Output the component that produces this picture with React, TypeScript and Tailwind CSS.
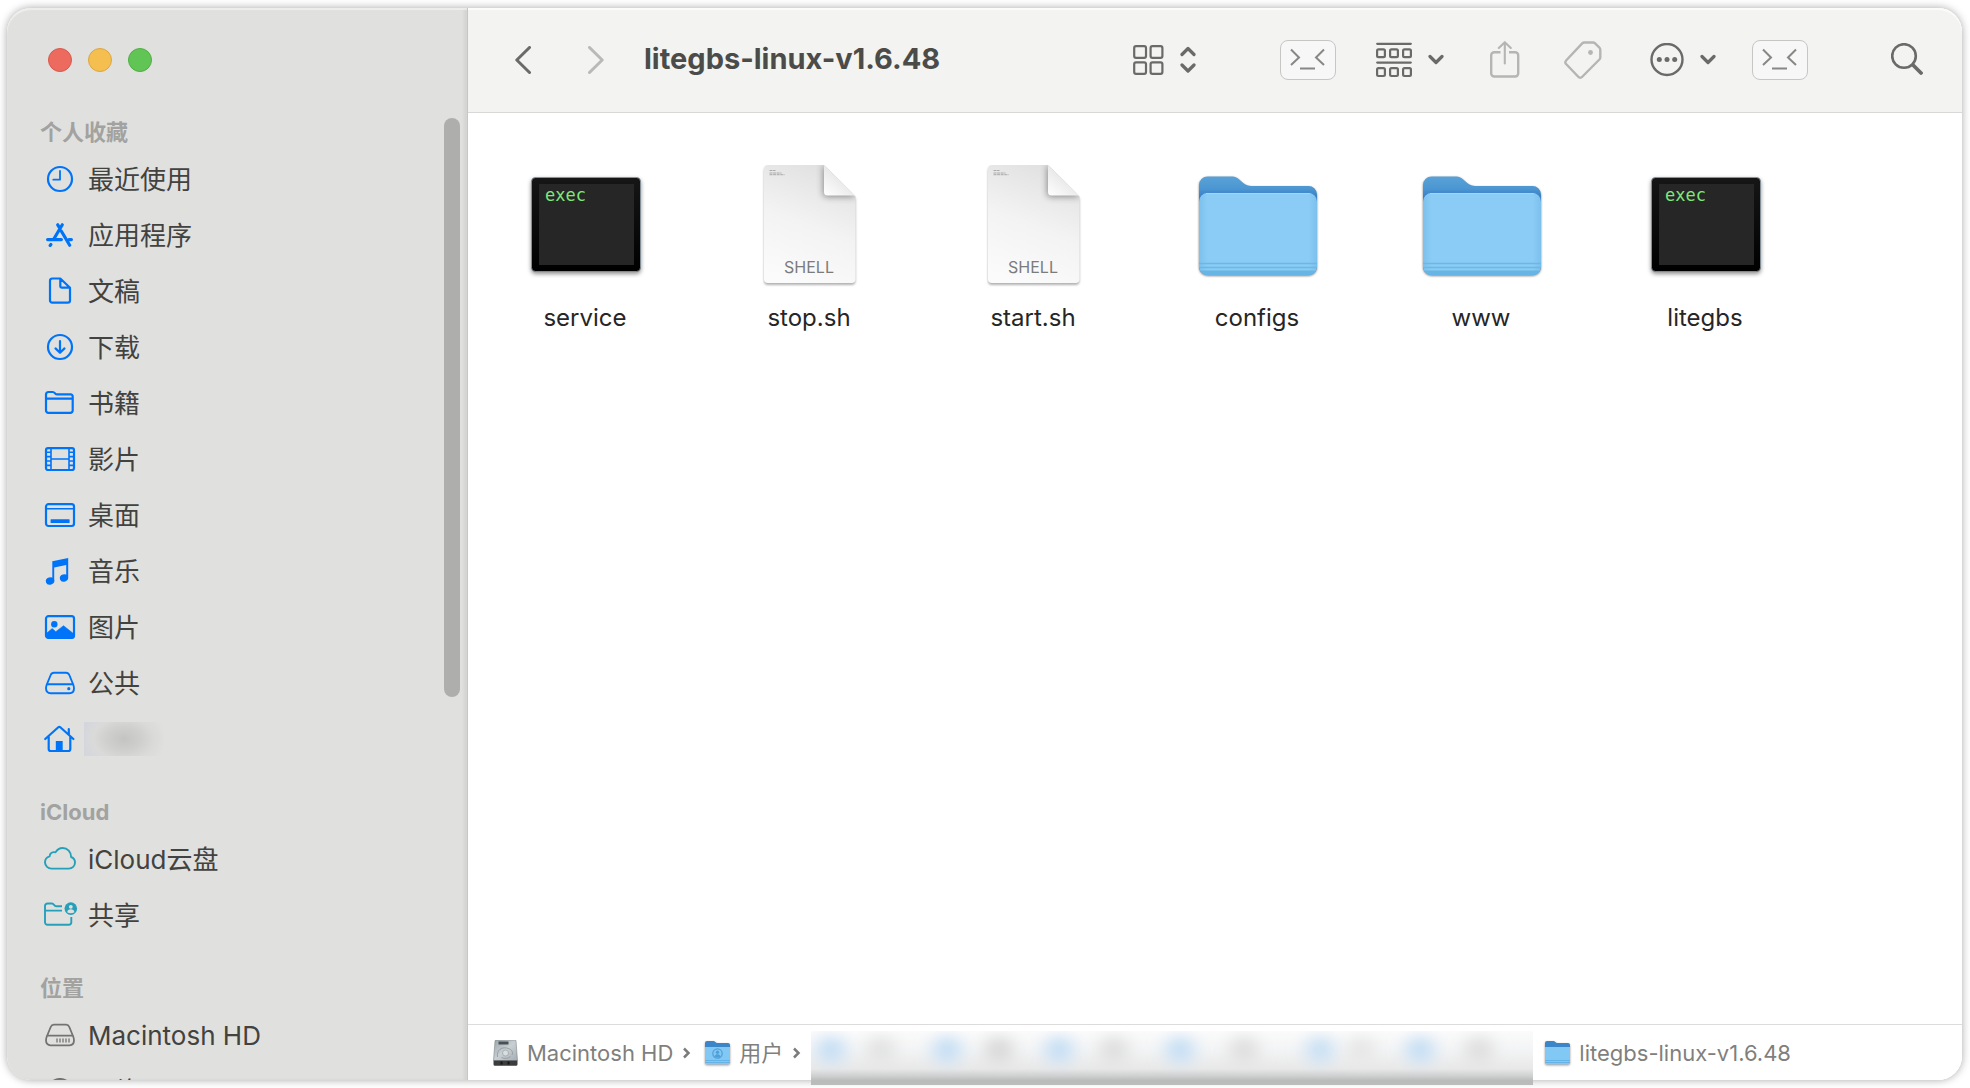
import type { ReactNode } from "react";

type IconProps = { children: ReactNode };

function SideIcon({ children }: IconProps) {
  return (
    <svg
      viewBox="0 0 32 32"
      className="size-8 shrink-0 overflow-visible"
      fill="none"
      stroke="currentColor"
      strokeWidth="2.2"
      strokeLinecap="round"
      strokeLinejoin="round"
      aria-hidden="true"
    >
      {children}
    </svg>
  );
}

const icons = {
  clock: (
    <>
      <circle cx="16" cy="16" r="12" />
      <path d="M16 8v8.7H9.3" strokeWidth="1.8" />
    </>
  ),
  apps: (
    <g strokeWidth="3.2">
      <path d="M18.3 5.8 9.8 20M3.6 20.6h13.8M25 20.6h2.4M13.7 5.8l1.6 2.6M17.4 12.2l8.3 14" />
      <path d="m6.9 25.4-.8 1" />
    </g>
  ),
  doc: (
    <path d="M16.3 3.5H8.2A2.2 2.2 0 0 0 6 5.7v19.8a2.2 2.2 0 0 0 2.2 2.2h15.6a2.2 2.2 0 0 0 2.2-2.2V12.8zM16.3 3.8v7.4a1.5 1.5 0 0 0 1.5 1.5H26" />
  ),
  download: (
    <>
      <circle cx="16" cy="16" r="12" />
      <path d="M16 10.2v11.4M11.5 17.4l4.5 4.4 4.5-4.4" />
    </>
  ),
  folder: (
    <path d="M2 23.5V7.3a2.3 2.3 0 0 1 2.3-2.3h4.6c1.8 0 2.3 2.4 4.2 2.4h13.6a2 2 0 0 1 2 2v14.1a2.3 2.3 0 0 1-2.3 2.3H4.3A2.3 2.3 0 0 1 2 23.5ZM2 11.7h26.7" />
  ),
  film: (
    <>
      <rect x="2" y="5.2" width="28" height="21.8" rx="2" />
      <path d="M7 5.5v21M25 5.5v21M7 16h18M2.5 9.3H7M2.5 13.6H7M2.5 18H7M2.5 22.4H7M25 9.3h4.5M25 13.6h4.5M25 18h4.5M25 22.4h4.5" strokeWidth="1.6" />
    </>
  ),
  desktop: (
    <>
      <rect x="2" y="5.2" width="28" height="21.8" rx="2.4" />
      <path d="M2.4 9.7h27.2" strokeWidth="1.6" />
      <rect x="6.6" y="20.2" width="19" height="3.8" rx="0.6" fill="currentColor" stroke="none" />
    </>
  ),
  music: (
    <g fill="currentColor" stroke="none">
      <path d="M8.3 6.2 24.2 3v19.5h-2V10l-12 2.6v13H8.3z" />
      <ellipse cx="6.1" cy="26" rx="4.3" ry="3.6" transform="rotate(-20 6.1 26)" />
      <ellipse cx="20" cy="23" rx="4.2" ry="3.6" transform="rotate(-20 20 23)" />
    </g>
  ),
  picture: (
    <>
      <rect x="2" y="5.2" width="28" height="21.8" rx="2.4" />
      <circle cx="10.3" cy="13.3" r="3.2" fill="currentColor" stroke="none" />
      <path d="m2 22.8 6.2-5.3 3.6 3.2 7.7-6 10.2 8.1v3.4l-1 .8H3.2L2 26z" fill="currentColor" strokeWidth="0.6" />
    </>
  ),
  drive: (
    <>
      <path d="M2 21.3c0-1.3.3-2.5.8-3.8L6.7 8c.6-1.5 1.6-2.3 3.2-2.3h12.2c1.6 0 2.6.8 3.2 2.3l3.9 9.5c.5 1.3.8 2.5.8 3.8 0 3-1.7 5-4.5 5h-19C3.7 26.3 2 24.3 2 21.3ZM3 17.2h26" strokeWidth="1.9" />
      <circle cx="24.8" cy="21.7" r="1.6" fill="currentColor" stroke="none" />
    </>
  ),
  home: (
    <>
      <path d="M1.2 16 14.3 4.3a1.5 1.5 0 0 1 2 0L29.4 16M24.8 11.5V6.2M4.7 14v12a2 2 0 0 0 2 2h17.6a2 2 0 0 0 2-2V14" />
      <path d="M11.8 18h6.9v10h-6.9z" fill="currentColor" stroke="none" />
    </>
  ),
  cloud: (
    <path d="M7.600 25.600A6.400 6.400 0 0 1 1 19.400c0-3 1.900-5.300 4.600-6 .1-3.200 3.200-5 5.900-4 1.500-2.600 4-4.400 7.100-4.400 4.900 0 8.600 4 8.500 9 2.300.8 3.900 2.900 3.900 5.500 0 3.500-2.700 6.100-6.300 6.100z" strokeWidth="1.9" />
  ),
  shared: (
    <>
      <path d="M18 7.200h-6C10.300 7.200 9.800 4.500 8 4.500H3.500a2.500 2.500 0 0 0-2.500 2.500v16.200a2.500 2.500 0 0 0 2.500 2.500h21.300a2.500 2.500 0 0 0 2.500-2.500V18M1 11.600h17" strokeLinecap="butt" strokeWidth="1.9" />
      <circle cx="26.800" cy="9.600" r="6.300" fill="currentColor" stroke="none" />
      <circle cx="26.800" cy="7.800" r="1.900" fill="#e0e0de" stroke="none" />
      <path d="M23.200 13.200c.3-2 1.700-2.900 3.600-2.900s3.300.9 3.600 2.900c-2 1.300-5.200 1.300-7.200 0z" fill="#e0e0de" stroke="none" />
    </>
  ),
  disk: (
    <>
      <path d="M2 21.300c0-1.300.3-2.500.8-3.800L6.700 8c.6-1.500 1.600-2.300 3.200-2.300h12.200c1.600 0 2.600.8 3.200 2.300l3.900 9.500c.5 1.300.8 2.500.8 3.800 0 3-1.700 5-4.500 5h-19C3.700 26.300 2 24.300 2 21.300ZM3 16.600h26" strokeWidth="1.8" />
      <path d="M13 20v3M16 20v3M19 20v3M22 20v3M25 20v3" strokeWidth="1.300" />
    </>
  ),
  globe: (
    <>
      <circle cx="16" cy="16" r="12" />
      <ellipse cx="16" cy="16" rx="5.500" ry="12" />
      <path d="M4 16h24" />
    </>
  ),
};

type Section = {
  title: string;
  tone: string;
  items: { icon: keyof typeof icons; label: string }[];
};

const sections: Section[] = [
  {
    title: "个人收藏",
    tone: "text-[#0074f8]",
    items: [
      { icon: "clock", label: "最近使用" },
      { icon: "apps", label: "应用程序" },
      { icon: "doc", label: "文稿" },
      { icon: "download", label: "下载" },
      { icon: "folder", label: "书籍" },
      { icon: "film", label: "影片" },
      { icon: "desktop", label: "桌面" },
      { icon: "music", label: "音乐" },
      { icon: "picture", label: "图片" },
      { icon: "drive", label: "公共" },
      { icon: "home", label: "" },
    ],
  },
  {
    title: "iCloud",
    tone: "text-[#26a0b9]",
    items: [
      { icon: "cloud", label: "iCloud云盘" },
      { icon: "shared", label: "共享" },
    ],
  },
  {
    title: "位置",
    tone: "text-[#737371]",
    items: [
      { icon: "disk", label: "Macintosh HD" },
      { icon: "globe", label: "网络" },
    ],
  },
];

function Sidebar() {
  return (
    <aside className="flex w-[461px] shrink-0 flex-col overflow-hidden rounded-l-[24px] border-r border-[#c6c6c4] bg-[#e0e0de] shadow-[inset_0_2px_1px_rgba(255,255,255,0.5),inset_-3px_0_3px_rgba(0,0,0,0.06)]">
      <div className="flex h-[107px] shrink-0 gap-4 pt-10 pl-[41px]">
        <button aria-label="关闭" className="size-6 rounded-full border border-[#d9584e] bg-[#ed6a5f]" />
        <button aria-label="最小化" className="size-6 rounded-full border border-[#dba644] bg-[#f5bf4f]" />
        <button aria-label="缩放" className="size-6 rounded-full border border-[#52ad44] bg-[#61c555]" />
      </div>
      <div className="flex min-h-0 flex-1">
        <nav className="flex min-w-0 flex-1 flex-col gap-7 overflow-hidden">
          {sections.map((section) => (
            <section key={section.title}>
              <h2 className="h-9 pl-[33px] text-[22px] leading-[34px] font-bold text-[#a2a2a0]">{section.title}</h2>
              <ul>
                {section.items.map((item) => (
                  <li key={item.icon}>
                    <a href="#" className="flex h-14 items-center gap-3 pl-[37px]">
                      <span className={section.tone}>
                        <SideIcon>{icons[item.icon]}</SideIcon>
                      </span>
                      {item.label ? (
                        <span className="pt-[2px] text-[26px] leading-8 whitespace-nowrap text-[#424240]">{item.label}</span>
                      ) : (
                        <span className="-ml-1 h-[34px] w-20 bg-[radial-gradient(ellipse_38px_26px_at_40px_17px,#c4c4c2_0%,#cfcfcd_45%,#dadad9_80%,transparent_110%),linear-gradient(90deg,#d4d6dc,#e0e0de)]" />
                      )}
                    </a>
                  </li>
                ))}
              </ul>
            </section>
          ))}
        </nav>
        <div className="mt-[3px] mr-[7px] h-[60%] w-4 shrink-0 rounded-full bg-[#aeaeac]" />
      </div>
    </aside>
  );
}

function ChevronDown() {
  return (
    <svg width="16" height="12" viewBox="0 0 16 12" fill="none" stroke="#6a6a68" strokeWidth="3.200" strokeLinecap="round" strokeLinejoin="round">
      <path d="m2 2.500 6 6 6-6" />
    </svg>
  );
}

function TerminalButton() {
  return (
    <button aria-label="终端" className="flex h-10 w-14 items-center justify-center rounded-lg border border-[#c6c6c4] bg-[#f7f7f7]">
      <svg width="54" height="38" viewBox="0 0 54 38" fill="none" stroke="#878785" strokeWidth="2">
        <path d="m10 8.500 8 8-8 7.500M43 8.500l-8 8 8 7.500M19 27.500h15" />
      </svg>
    </button>
  );
}

function Toolbar() {
  return (
    <header className="flex h-[105px] shrink-0 items-center rounded-tr-[24px] border-b border-[#d8d8d6] bg-[#f3f3f1] pr-[39px] pl-[47px] shadow-[inset_0_2px_1px_rgba(255,255,255,0.7)]">
      <button aria-label="后退">
        <svg width="16" height="28" viewBox="0 0 16 28" fill="none" stroke="#6a6a68" strokeWidth="3" strokeLinecap="round" strokeLinejoin="round">
          <path d="M14.500 1.500 1.800 14l12.700 12.500" />
        </svg>
      </button>
      <button aria-label="前进" className="ml-[57px]">
        <svg width="16" height="28" viewBox="0 0 16 28" fill="none" stroke="#b9b9b7" strokeWidth="3" strokeLinecap="round" strokeLinejoin="round">
          <path d="M1.500 1.500 14.200 14 1.500 26.500" />
        </svg>
      </button>
      <h1 className="ml-10 pb-[2px] text-[29px] leading-9 font-bold whitespace-nowrap text-[#4b4b49]">litegbs-linux-v1.6.48</h1>

      <div className="ml-auto flex items-center">
        <button aria-label="显示方式" className="flex items-center gap-4">
          <svg width="31" height="30" viewBox="0 0 31 30" fill="none" stroke="#6a6a68" strokeWidth="2.200">
            <rect x="1.200" y="1.200" width="11.800" height="11.600" rx="1.800" />
            <rect x="17.600" y="1.200" width="11.800" height="11.600" rx="1.800" />
            <rect x="1.200" y="17.300" width="11.800" height="11.600" rx="1.800" />
            <rect x="17.600" y="17.300" width="11.800" height="11.600" rx="1.800" />
          </svg>
          <svg width="16" height="28" viewBox="0 0 16 28" fill="none" stroke="#6a6a68" strokeWidth="3.200" strokeLinecap="round" strokeLinejoin="round">
            <path d="m2 8.500 6-6 6 6M2 19l6 6 6-6" />
          </svg>
        </button>
        <div className="ml-[84px]">
          <TerminalButton />
        </div>
        <button aria-label="分组" className="ml-10 flex items-center gap-4">
          <svg width="36" height="36" viewBox="0 0 36 36" fill="none" stroke="#6a6a68" strokeWidth="2.200">
            <path d="M1.200 1.800h33.600M1.200 20.600h33.600" strokeLinecap="round" />
            <rect x="1.100" y="7.400" width="7.800" height="7.800" rx="1.400" />
            <rect x="14.100" y="7.400" width="7.800" height="7.800" rx="1.400" />
            <rect x="27.100" y="7.400" width="7.800" height="7.800" rx="1.400" />
            <rect x="1.100" y="26.200" width="7.800" height="7.800" rx="1.400" />
            <rect x="14.100" y="26.200" width="7.800" height="7.800" rx="1.400" />
            <rect x="27.100" y="26.200" width="7.800" height="7.800" rx="1.400" />
          </svg>
          <ChevronDown />
        </button>
        <button aria-label="共享" className="ml-[46px]">
          <svg width="30" height="38" viewBox="0 0 30 38" fill="none" stroke="#b5b5b3" strokeWidth="2.400" strokeLinecap="round" strokeLinejoin="round">
            <path d="M14.800 22.500V1.500M8.800 7l6-5.800 6 5.800" strokeWidth="2.100" />
            <path d="M10.500 11.300H4.200a3 3 0 0 0-3 3v18.200a3 3 0 0 0 3 3h21a3 3 0 0 0 3-3V14.300a3 3 0 0 0-3-3h-6.200" strokeLinecap="butt" />
          </svg>
        </button>
        <button aria-label="标签" className="ml-11">
          <svg width="38" height="38" viewBox="0 0 38 38" fill="none" stroke="#b5b5b3" strokeWidth="2.400" strokeLinejoin="round">
            <path d="M20.500 1.500H29a3 3 0 0 1 2.100.9l4.300 4.200a3 3 0 0 1 .9 2.200v7.500a3 3 0 0 1-.9 2.200L18 36a2.400 2.400 0 0 1-3.500 0L2.100 23a2.400 2.400 0 0 1 0-3.500L18.200 2.400a3 3 0 0 1 2.300-.9Z" />
            <circle cx="26.500" cy="11.500" r="2.400" fill="#b5b5b3" stroke="none" />
          </svg>
        </button>
        <button aria-label="操作" className="ml-12 flex items-center gap-4">
          <svg width="34" height="34" viewBox="0 0 34 34" fill="#6a6a68">
            <circle cx="17" cy="16.500" r="15.500" fill="none" stroke="#6a6a68" strokeWidth="2.400" />
            <circle cx="9.300" cy="16.500" r="2.500" />
            <circle cx="17" cy="16.500" r="2.500" />
            <circle cx="24.700" cy="16.500" r="2.500" />
          </svg>
          <ChevronDown />
        </button>
        <div className="ml-9">
          <TerminalButton />
        </div>
        <button aria-label="搜索" className="ml-[83px]">
          <svg width="32" height="34" viewBox="0 0 32 34" fill="none" stroke="#6a6a68" strokeLinecap="round">
            <circle cx="13" cy="13" r="11.800" strokeWidth="2.600" />
            <path d="m22 22 8 8" strokeWidth="3.800" />
          </svg>
        </button>
      </div>
    </header>
  );
}

function ExecIcon() {
  return (
    <svg viewBox="0 0 128 128" className="size-32 overflow-visible">
      <defs>
        <linearGradient id="exec-frame" x1="0" y1="0" x2="0" y2="1">
          <stop offset="0" stopColor="#161616" />
          <stop offset="1" stopColor="#000" />
        </linearGradient>
      </defs>
      <g className="drop-shadow-[0_2px_2px_rgba(0,0,0,0.45)]">
        <rect x="10.500" y="16.500" width="109" height="94" rx="4" fill="url(#exec-frame)" stroke="#8a9aa5" strokeWidth="0.800" />
      </g>
      <rect x="18" y="23" width="95" height="81" fill="#262626" />
      <text x="24" y="40" fontSize="17" fill="#7fe87a" className="font-['DejaVu_Sans_Mono',monospace]">
        exec
      </text>
    </svg>
  );
}

function ShellIcon() {
  return (
    <svg viewBox="0 0 128 128" className="size-32 overflow-visible">
      <defs>
        <linearGradient id="sheet" x1="0.300" y1="1" x2="0.600" y2="0">
          <stop offset="0" stopColor="#fbfbfb" />
          <stop offset="0.500" stopColor="#f3f3f3" />
          <stop offset="1" stopColor="#e1e1e1" />
        </linearGradient>
        <linearGradient id="fold" x1="0" y1="1" x2="0.600" y2="0.300">
          <stop offset="0" stopColor="#ffffff" />
          <stop offset="1" stopColor="#e4e4e4" />
        </linearGradient>
        <clipPath id="sheet-clip">
          <path d="M23 4h56l31.500 31.500V118a4 4 0 0 1-4 4H23a4 4 0 0 1-4-4V8a4 4 0 0 1 4-4Z" />
        </clipPath>
      </defs>
      <path
        d="M23 4h56l31.500 31.500V118a4 4 0 0 1-4 4H23a4 4 0 0 1-4-4V8a4 4 0 0 1 4-4Z"
        fill="url(#sheet)"
        className="drop-shadow-[0_2px_1px_rgba(0,0,0,0.3)]"
      />
      <g clipPath="url(#sheet-clip)">
        <path d="M78 3v29a4 4 0 0 0 4 4h30z" fill="#555" opacity="0.600" className="blur-[3px]" />
      </g>
      <path d="M79 4v27a3.500 3.500 0 0 0 3.500 3.500H110z" fill="url(#fold)" />
      <path d="M24.500 9.500h6M24.500 12h12M24.500 13.700h15" stroke="#a3a3a3" strokeWidth="0.900" strokeDasharray="3 0.600" />
      <text x="64" y="112" fontSize="16" textAnchor="middle" fill="#7b7b7b">
        SHELL
      </text>
    </svg>
  );
}

function FolderIcon() {
  return (
    <svg viewBox="0 0 128 128" className="size-32 overflow-visible">
      <defs>
        <linearGradient id="folder-back" x1="0" y1="0" x2="0" y2="1">
          <stop offset="0" stopColor="#5aa2d6" />
          <stop offset="0.120" stopColor="#4c97d3" />
          <stop offset="0.200" stopColor="#3a80c6" />
          <stop offset="1" stopColor="#3a80c6" />
        </linearGradient>
        <linearGradient id="folder-front" x1="0" y1="0" x2="1" y2="0">
          <stop offset="0" stopColor="#7cc0ec" />
          <stop offset="0.070" stopColor="#8accf6" />
          <stop offset="0.930" stopColor="#8accf6" />
          <stop offset="1" stopColor="#7cc0ec" />
        </linearGradient>
      </defs>
      <path
        d="M6 24a8.500 8.500 0 0 1 8.500-8.500h25.500c6.500 0 9.500 9.500 18 9.500h57.500a8.500 8.500 0 0 1 8.500 8.500v72a8.500 8.500 0 0 1-8.500 8.500H14.500a8.500 8.500 0 0 1-8.500-8.500z"
        fill="url(#folder-back)"
        className="drop-shadow-[0_1px_1px_rgba(0,0,0,0.5)]"
      />
      <rect x="6" y="32" width="118" height="82" rx="8.500" fill="url(#folder-front)" />
      <path d="M13 32.600h104" stroke="#a3d8f8" strokeWidth="1" />
      <path d="M6.800 109.500h116.400a8 8 0 0 1-7.700 4.500h-101a8 8 0 0 1-7.700-4.500Z" fill="#68b4e4" />
      <path d="M6 102.500h118M6 106.500h118" stroke="#6db6e6" strokeWidth="1.400" />
    </svg>
  );
}

const files = [
  { name: "service", Icon: ExecIcon },
  { name: "stop.sh", Icon: ShellIcon },
  { name: "start.sh", Icon: ShellIcon },
  { name: "configs", Icon: FolderIcon },
  { name: "www", Icon: FolderIcon },
  { name: "litegbs", Icon: ExecIcon },
];

function FileGrid() {
  return (
    <main className="flex min-h-0 flex-1 flex-wrap content-start overflow-hidden pt-12 pl-[5px]">
      {files.map(({ name, Icon }) => (
        <a key={name} href="#" className="flex w-56 flex-col items-center">
          <Icon />
          <span className="mt-[13px] text-[24px] leading-8 text-[#262626]">{name}</span>
        </a>
      ))}
    </main>
  );
}

function SmallFolder({ user = false }: { user?: boolean }) {
  return (
    <svg width="25" height="24" viewBox="0 0 25 24" className="block shrink-0 drop-shadow-[0_1px_1px_rgba(0,0,0,0.4)]">
      <path d="M0 2a2 2 0 0 1 2-2h6.500c1.500 0 2 2 4 2H23a2 2 0 0 1 2 2v16H0z" fill="#3b86c9" />
      <path d="M0 6h25v15.500a1.800 1.800 0 0 1-1.800 1.800H1.800A1.800 1.800 0 0 1 0 21.500z" fill="#82c8f5" />
      <path d="M0 19.500h25M0 21.500h25" stroke="#62b0e4" strokeWidth="0.900" />
      {user && (
        <>
          <circle cx="12.500" cy="12.500" r="4.700" fill="none" stroke="#4f9fd8" strokeWidth="1.200" />
          <circle cx="12.500" cy="11.300" r="1.700" fill="#4f9fd8" />
          <path d="M9.500 15.500c.5-1.800 1.600-2.300 3-2.300s2.500.5 3 2.300c-1.600 1.400-4.400 1.400-6 0Z" fill="#4f9fd8" />
        </>
      )}
    </svg>
  );
}

function HardDisk() {
  return (
    <svg width="25" height="26" viewBox="0 0 24 26" className="shrink-0">
      <defs>
        <linearGradient id="hd-body" x1="0" y1="0" x2="1" y2="1">
          <stop offset="0" stopColor="#9aa4aa" />
          <stop offset="0.500" stopColor="#c9d0d4" />
          <stop offset="1" stopColor="#a5adb2" />
        </linearGradient>
      </defs>
      <path d="M2.500 0h19a1 1 0 0 1 1 1L24 20.500H0L1.500 1a1 1 0 0 1 1-1Z" fill="url(#hd-body)" stroke="#7d868c" strokeWidth="0.600" />
      <path d="M0 20.500h24v3.700a1.500 1.500 0 0 1-1.500 1.500h-21A1.500 1.500 0 0 1 0 24.200z" fill="#3c3c3c" />
      <path d="M5 1.500h10v3H5z" fill="#4a5054" />
      <path d="M4 17c-1-7 4-10 9-9 5 .8 7 4 5.500 7M8 17.500c3 1.500 7 1.200 9-1" fill="none" stroke="#8b959b" strokeWidth="0.800" />
      <circle cx="12" cy="13" r="3" fill="#d9dee1" stroke="#98a1a6" strokeWidth="0.700" />
      <path d="M7 21.500h2v3H7zM14 21.500h2v3h-2z" fill="#161616" />
    </svg>
  );
}

function PathChevron() {
  return (
    <svg width="8" height="12" viewBox="0 0 8 12" fill="none" stroke="#7c7c7a" strokeWidth="2.500" className="shrink-0">
      <path d="m1 1.500 4.500 4.500L1 10.500" />
    </svg>
  );
}

// Hidden part of the path: only the soft colours of the entries show through
const blurSpots = [
  { x: 20, tone: "#c4def5" },
  { x: 70, tone: "#e2e2e2" },
  { x: 136, tone: "#c4def5" },
  { x: 188, tone: "#d8d8d8" },
  { x: 248, tone: "#c4def5" },
  { x: 303, tone: "#dedede" },
  { x: 369, tone: "#c4def5" },
  { x: 433, tone: "#dedede" },
  { x: 509, tone: "#c8e0f4" },
  { x: 550, tone: "#e6e6e6" },
  { x: 609, tone: "#c4def5" },
  { x: 668, tone: "#dedede" },
];

function HiddenPath() {
  return (
    <svg viewBox="0 0 722 54" preserveAspectRatio="none" className="mt-[6px] ml-[10px] h-[54px] w-[722px] shrink-0 self-start" aria-hidden="true">
      <defs>
        <linearGradient id="hidden-base" x1="0" y1="0" x2="0" y2="1">
          <stop offset="0" stopColor="#fbfbfb" />
          <stop offset="0.350" stopColor="#f3f4f5" />
          <stop offset="0.700" stopColor="#e8e8e8" />
          <stop offset="0.850" stopColor="#cbcccc" />
          <stop offset="0.920" stopColor="#b9bbbb" />
          <stop offset="1" stopColor="#bbbdbd" />
        </linearGradient>
        <filter id="hidden-blur" x="-1" y="-1" width="3" height="3">
          <feGaussianBlur stdDeviation="9 7" />
        </filter>
      </defs>
      <rect width="722" height="54" fill="url(#hidden-base)" />
      {blurSpots.map((spot) => (
        <circle key={spot.x} cx={spot.x} cy="19" r="14" fill={spot.tone} filter="url(#hidden-blur)" />
      ))}
    </svg>
  );
}

function PathBar() {
  return (
    <footer className="flex h-14 shrink-0 items-center rounded-br-[24px] border-t border-[#dcdcdc] bg-white pl-[25px] text-[22px] leading-7 whitespace-nowrap text-[#7f7f7d]">
      <HardDisk />
      <a href="#" className="mr-[10px] ml-[9px]">Macintosh HD</a>
      <PathChevron />
      <span className="ml-[14px]">
        <SmallFolder user />
      </span>
      <a href="#" className="mr-[10px] ml-[9px]">用户</a>
      <PathChevron />
      <HiddenPath />
      <span className="ml-3">
        <SmallFolder />
      </span>
      <a href="#" className="ml-[9px]">litegbs-linux-v1.6.48</a>
    </footer>
  );
}

export default function App() {
  return (
    <div className="h-screen overflow-hidden bg-white py-2 pr-2 pl-[7px] font-['Inter','Noto_Sans_CJK_SC',sans-serif]">
      <div className="flex h-full rounded-[24px] shadow-[0_0_8px_rgba(0,0,0,0.35)]">
        <Sidebar />
        <div className="flex min-w-0 flex-1 flex-col rounded-r-[24px] bg-white">
          <Toolbar />
          <FileGrid />
          <PathBar />
        </div>
      </div>
    </div>
  );
}
